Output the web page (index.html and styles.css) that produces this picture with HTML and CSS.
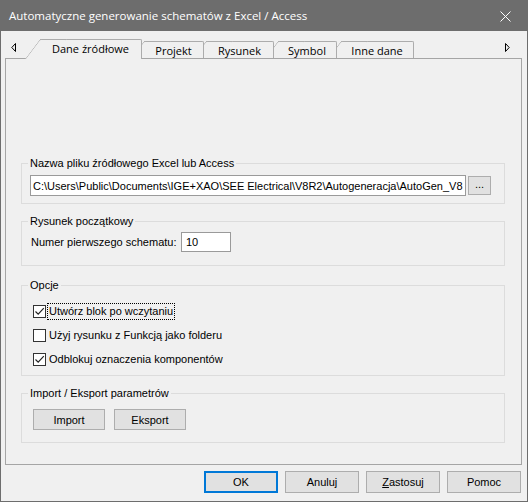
FILE: index.html
```html
<!DOCTYPE html>
<html lang="pl">
<head>
<meta charset="utf-8">
<title>Automatyczne generowanie schematów z Excel / Access</title>
<link rel="stylesheet" href="styles.css">
</head>
<body>
<div class="window">
  <div class="titlebar">
    <span class="title">Automatyczne generowanie schematów z Excel / Access</span>
    <svg class="close" width="11" height="11" viewBox="0 0 11 11"><path d="M0.5 0.5 L10.5 10.5 M10.5 0.5 L0.5 10.5" stroke="#fff" stroke-width="1" fill="none"/></svg>
  </div>
  <div class="tabrow">
    <svg class="arrow" width="6" height="9" viewBox="0 0 6 9"><polygon points="4.5,0.5 4.5,8.5 0.8,4.5" fill="none" stroke="#000" stroke-width="1"/></svg>
    <div class="tabs">
      <div class="tab active w1">Dane źródłowe</div>
      <div class="tab w2">Projekt</div>
      <div class="tab w3">Rysunek</div>
      <div class="tab w4">Symbol</div>
      <div class="tab w5">Inne dane</div>
    </div>
    <svg class="arrow right" width="6" height="9" viewBox="0 0 6 9"><polygon points="1.5,0.5 1.5,8.5 5.2,4.5" fill="none" stroke="#000" stroke-width="1"/></svg>
  </div>
  <div class="panel">
    <fieldset class="group g1">
      <legend>Nazwa pliku źródłowego Excel lub Access</legend>
      <div class="filerow">
        <div class="textbox path">C:\Users\Public\Documents\IGE+XAO\SEE Electrical\V8R2\Autogeneracja\AutoGen_V8</div>
        <div class="btn browse">...</div>
      </div>
    </fieldset>
    <fieldset class="group g2">
      <legend>Rysunek początkowy</legend>
      <div class="numrow">
        <span class="numlabel">Numer pierwszego schematu:</span>
        <div class="textbox num">10</div>
      </div>
    </fieldset>
    <fieldset class="group g3">
      <legend>Opcje</legend>
      <div class="checks">
        <div class="check">
          <span class="box"><svg width="11" height="11" viewBox="0 0 11 11"><path d="M1.5 5.5 L4.2 8.2 L9.8 2.2" fill="none" stroke="#222" stroke-width="1.2"/></svg></span>
          <span class="clabel focus">Utwórz blok po wczytaniu</span>
        </div>
        <div class="check">
          <span class="box"></span>
          <span class="clabel">Użyj rysunku z Funkcją jako folderu</span>
        </div>
        <div class="check">
          <span class="box"><svg width="11" height="11" viewBox="0 0 11 11"><path d="M1.5 5.5 L4.2 8.2 L9.8 2.2" fill="none" stroke="#222" stroke-width="1.2"/></svg></span>
          <span class="clabel">Odblokuj oznaczenia komponentów</span>
        </div>
      </div>
    </fieldset>
    <fieldset class="group g4">
      <legend>Import / Eksport parametrów</legend>
      <div class="iorow">
        <div class="btn io">Import</div>
        <div class="btn io">Eksport</div>
      </div>
    </fieldset>
  </div>
  <div class="footer">
    <div class="btn dlg default">OK</div>
    <div class="btn dlg">Anuluj</div>
    <div class="btn dlg"><u>Z</u>astosuj</div>
    <div class="btn dlg">Pomoc</div>
  </div>
</div>
</body>
</html>
```
FILE: styles.css
```css
html, body {
  margin: 0;
  padding: 0;
  background: #f0f0f0;
}
.window {
  width: 528px;
  height: 502px;
  box-sizing: border-box;
  border: 1px solid #6d6d6d;
  border-top: none;
  background: #f0f0f0;
  display: flex;
  flex-direction: column;
  font-family: "Liberation Sans", Arial, sans-serif;
  font-size: 11px;
  color: #000;
}
.titlebar {
  height: 31px;
  margin: 0 -1px;
  background: #6d6d6d;
  display: flex;
  align-items: center;
  padding-left: 9px;
  padding-right: 17px;
}
.title {
  font-family: "Open Sans", "Noto Sans", sans-serif;
  font-size: 11.5px;
  color: #fff;
  flex: 1;
  margin-top: -1px;
}
.close {
  display: block;
  margin-top: 1px;
}
.tabrow {
  height: 27px;
  display: flex;
  align-items: flex-end;
  padding-left: 10px;
  padding-right: 17px;
}
.arrow {
  display: block;
  align-self: flex-start;
  margin-top: 12px;
}
.arrow.right {
  margin-left: auto;
}
.tabs {
  display: flex;
  align-items: flex-end;
  margin-left: 23px;
  font-family: "Open Sans", "Noto Sans", sans-serif;
  font-size: 11px;
}
.tab {
  position: relative;
  z-index: 1;
  box-sizing: border-box;
  height: 17px;
  border-top: 1px solid #acacac;
  border-right: 1px solid #acacac;
  border-top-right-radius: 2px;
  background: #f0f0f0;
  display: flex;
  align-items: center;
  justify-content: center;
  line-height: 14px;
  padding-top: 1px;
}
.tab::before {
  content: "";
  position: absolute;
  z-index: -1;
  left: 0;
  top: -1px;
  bottom: 0;
  width: 26px;
  border-top: 1px solid #acacac;
  border-left: 1px solid #acacac;
  border-top-left-radius: 2px;
  background: #f0f0f0;
  transform-origin: top left;
  transform: skewX(-37deg);
}
.tab.active {
  z-index: 10;
  height: 20px;
  margin-bottom: -1px;
  padding-top: 0;
  padding-bottom: 2px;
}
.w1 { width: 102px; }
.w2 { width: 60px; margin-left: 2px; z-index: 5; }
.w3 { width: 68px; margin-left: 2px; z-index: 4; }
.w4 { width: 59px; margin-left: 4px; z-index: 3; }
.w5 { width: 73px; margin-left: 4px; z-index: 2; }

.panel {
  box-sizing: border-box;
  margin-left: 4px;
  width: 517px;
  height: 407px;
  border: 1px solid #a5a5a5;
  padding-top: 98px;
}
.group {
  margin: 0 0 0 15px;
  width: 484px;
  box-sizing: border-box;
  border: 1px solid #dcdcdc;
  padding: 0;
  min-inline-size: 0;
}
.group legend {
  margin-left: 6px;
  padding: 0 2px;
  line-height: 13px;
  height: 13px;
}
.g2 { margin-top: 11px; }
.g3 { margin-top: 13px; }
.g4 { margin-top: 11px; }

.textbox {
  box-sizing: border-box;
  background: #fff;
  border: 1px solid #9a9a9a;
  white-space: nowrap;
  overflow: hidden;
  display: flex;
  align-items: center;
}
.btn {
  box-sizing: border-box;
  background: #e1e1e1;
  border: 1px solid #adadad;
  display: flex;
  align-items: center;
  justify-content: center;
  white-space: nowrap;
}
.filerow {
  display: flex;
  align-items: center;
  margin: 5px 0 7px 8px;
}
.path {
  width: 436px;
  height: 21px;
  padding-left: 2px;
}
.browse {
  width: 23px;
  height: 19px;
  margin-left: 2px;
  padding-bottom: 3px;
}
.numrow {
  display: flex;
  align-items: center;
  margin: 4px 0 13px 9px;
  height: 20px;
}
.numlabel {
  width: 150px;
}
.num {
  width: 50px;
  height: 20px;
  padding-left: 4px;
}
.checks {
  margin: 7px 0 4px 11px;
}
.check {
  height: 24px;
  display: flex;
  align-items: center;
}
.box {
  box-sizing: border-box;
  width: 13px;
  height: 13px;
  border: 1px solid #333;
  background: #fff;
  display: flex;
  align-items: center;
  justify-content: center;
}
.box svg { display: block; }
.clabel {
  margin-left: 1px;
  padding: 1px 1px;
  line-height: 13px;
  border: 1px solid transparent;
}
.clabel.focus {
  border: 1px dotted #000;
}
.iorow {
  display: flex;
  gap: 9px;
  margin: 9px 0 12px 11px;
}
.io {
  width: 72px;
  height: 21px;
}
.footer {
  display: flex;
  justify-content: flex-end;
  gap: 7px;
  margin-top: 6px;
  padding-right: 6px;
}
.dlg {
  width: 74px;
  height: 22px;
}
.dlg.default {
  border: 2px solid #0078d7;
}
```
